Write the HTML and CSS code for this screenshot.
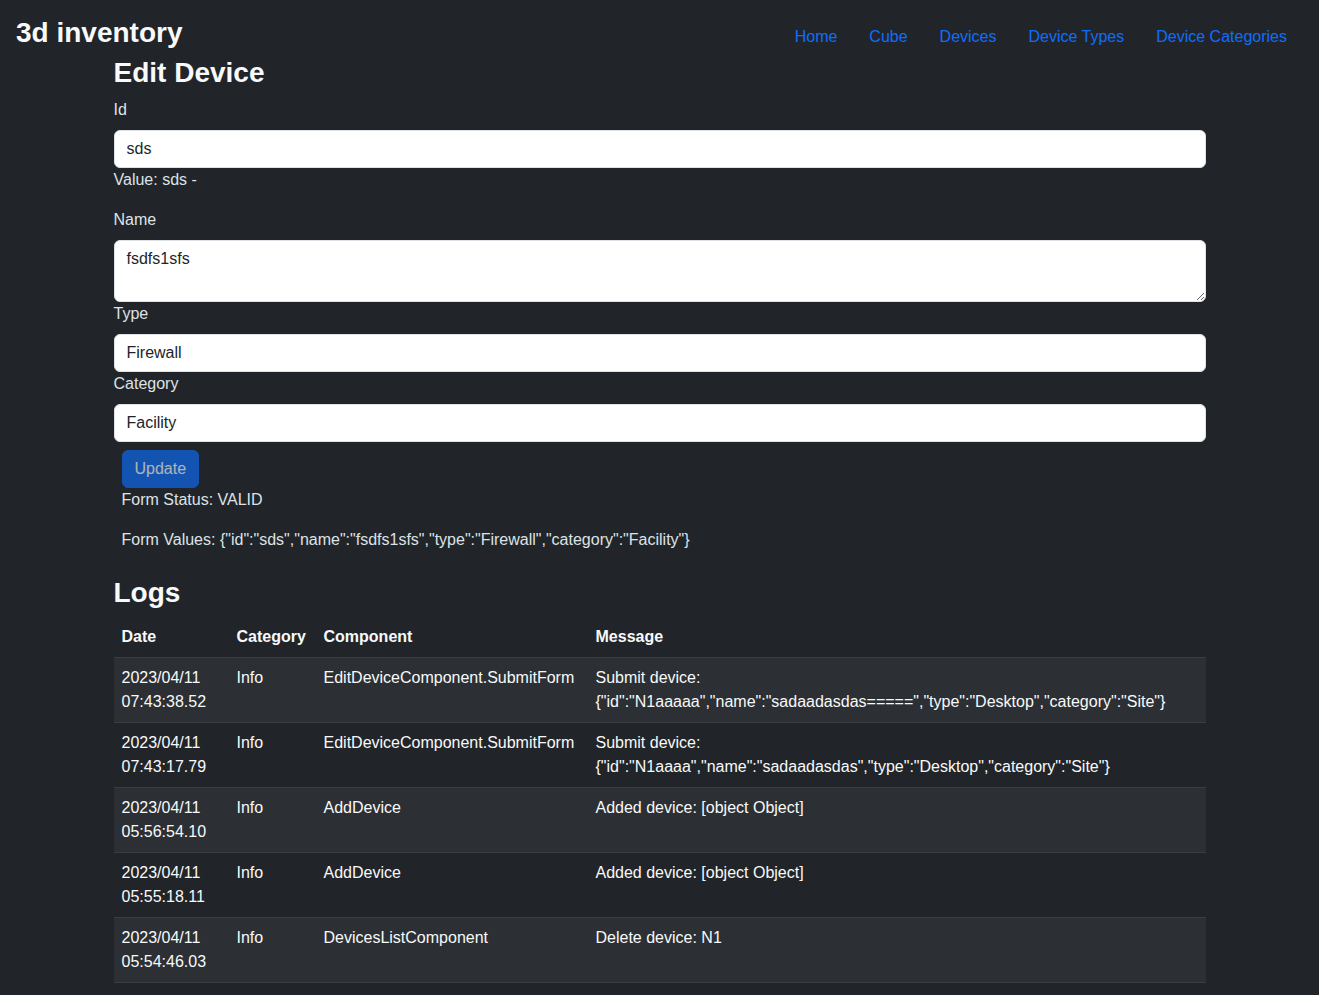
FILE: index.html
```html
<!DOCTYPE html>
<html lang="en">
<head>
<meta charset="utf-8">
<title>3d inventory</title>
<link rel="stylesheet" href="styles.css">
</head>
<body>
<nav class="navbar">
  <a class="brand" href="#">3d inventory</a>
  <ul class="nav">
    <li><a class="nav-link" href="#">Home</a></li>
    <li><a class="nav-link" href="#">Cube</a></li>
    <li><a class="nav-link" href="#">Devices</a></li>
    <li><a class="nav-link" href="#">Device Types</a></li>
    <li><a class="nav-link" href="#">Device Categories</a></li>
  </ul>
</nav>
<main class="container">
  <h3 class="title">Edit Device</h3>
  <form class="form">
    <label class="form-label" for="id">Id</label>
    <input class="form-control" id="id" type="text" value="sds">
    <p class="hint">Value: sds -</p>
    <label class="form-label" for="name">Name</label>
    <textarea class="form-control textarea" id="name" rows="2">fsdfs1sfs</textarea>
    <label class="form-label" for="type">Type</label>
    <input class="form-control" id="type" type="text" value="Firewall">
    <label class="form-label" for="category">Category</label>
    <input class="form-control" id="category" type="text" value="Facility">
    <div class="actions">
      <button class="btn" type="button" disabled>Update</button>
      <p class="status">Form Status: VALID</p>
      <p class="status">Form Values: {"id":"sds","name":"fsdfs1sfs","type":"Firewall","category":"Facility"}</p>
    </div>
  </form>
  <h3 class="title logs-title">Logs</h3>
  <table class="table">
    <colgroup>
      <col class="col-date">
      <col class="col-cat">
      <col class="col-comp">
      <col class="col-msg">
    </colgroup>
    <thead>
      <tr><th>Date</th><th>Category</th><th>Component</th><th>Message</th></tr>
    </thead>
    <tbody>
      <tr><td>2023/04/11 07:43:38.52</td><td>Info</td><td>EditDeviceComponent.SubmitForm</td><td>Submit device: {"id":"N1aaaaa","name":"sadaadasdas=====","type":"Desktop","category":"Site"}</td></tr>
      <tr><td>2023/04/11 07:43:17.79</td><td>Info</td><td>EditDeviceComponent.SubmitForm</td><td>Submit device: {"id":"N1aaaa","name":"sadaadasdas","type":"Desktop","category":"Site"}</td></tr>
      <tr><td>2023/04/11 05:56:54.10</td><td>Info</td><td>AddDevice</td><td>Added device: [object Object]</td></tr>
      <tr><td>2023/04/11 05:55:18.11</td><td>Info</td><td>AddDevice</td><td>Added device: [object Object]</td></tr>
      <tr><td>2023/04/11 05:54:46.03</td><td>Info</td><td>DevicesListComponent</td><td>Delete device: N1</td></tr>
    </tbody>
  </table>
</main>
</body>
</html>
```
FILE: styles.css
```css
* { box-sizing: border-box; }
html, body {
  margin: 0;
  background: #212529;
  color: #dee2e6;
  font-family: "Liberation Sans", Arial, sans-serif;
  font-size: 16px;
  line-height: 1.5;
}
.navbar {
  display: flex;
  justify-content: space-between;
  align-items: baseline;
  padding: 12px 16px 2px;
}
.brand {
  font-size: 28px;
  line-height: 1.5;
  font-weight: 700;
  color: #f8f9fa;
  text-decoration: none;
}
.nav {
  display: flex;
  list-style: none;
  margin: 0;
  padding: 0;
}
.nav-link {
  display: block;
  padding: 0 16px;
  color: #0d6efd;
  text-decoration: none;
}
.container {
  width: 1092px;
  margin: 0 auto;
}
.title {
  font-size: 28px;
  line-height: 1.2;
  font-weight: 700;
  margin: 0 0 8px;
  color: #f8f9fa;
}
.form { display: flex; flex-direction: column; }
.form-label { display: block; margin-bottom: 8px; }
.form-control {
  display: block;
  width: 100%;
  height: 38px;
  padding: 6px 12px;
  font: inherit;
  font-size: 16px;
  line-height: 24px;
  color: #212529;
  background: #fff;
  border: 1px solid #dee2e6;
  border-radius: 6px;
  outline: none;
}
.textarea { height: 62px; resize: vertical; }
.hint { margin: 0 0 16px; }
.actions {
  padding: 0 8px;
  margin-top: 8px;
}
.btn {
  display: block;
  height: 38px;
  padding: 6px 12px;
  font: inherit;
  line-height: 24px;
  color: #fff;
  background: #0d6efd;
  border: 1px solid #0d6efd;
  border-radius: 6px;
  opacity: 0.65;
}
.status { margin: 0 0 16px; }
.logs-title { margin-top: 8px; }
.table {
  width: 100%;
  table-layout: fixed;
  border-collapse: collapse;
  margin-bottom: 16px;
}
.col-date { width: 115px; }
.col-cat { width: 87px; }
.col-comp { width: 272px; }
.table th, .table td {
  padding: 8px;
  text-align: left;
  vertical-align: top;
  border-bottom: 1px solid #3a3e42;
  color: #f8f9fa;
}
.table th { font-weight: 700; }
.table tbody tr:nth-child(odd) td { background: #2c3034; }
```
